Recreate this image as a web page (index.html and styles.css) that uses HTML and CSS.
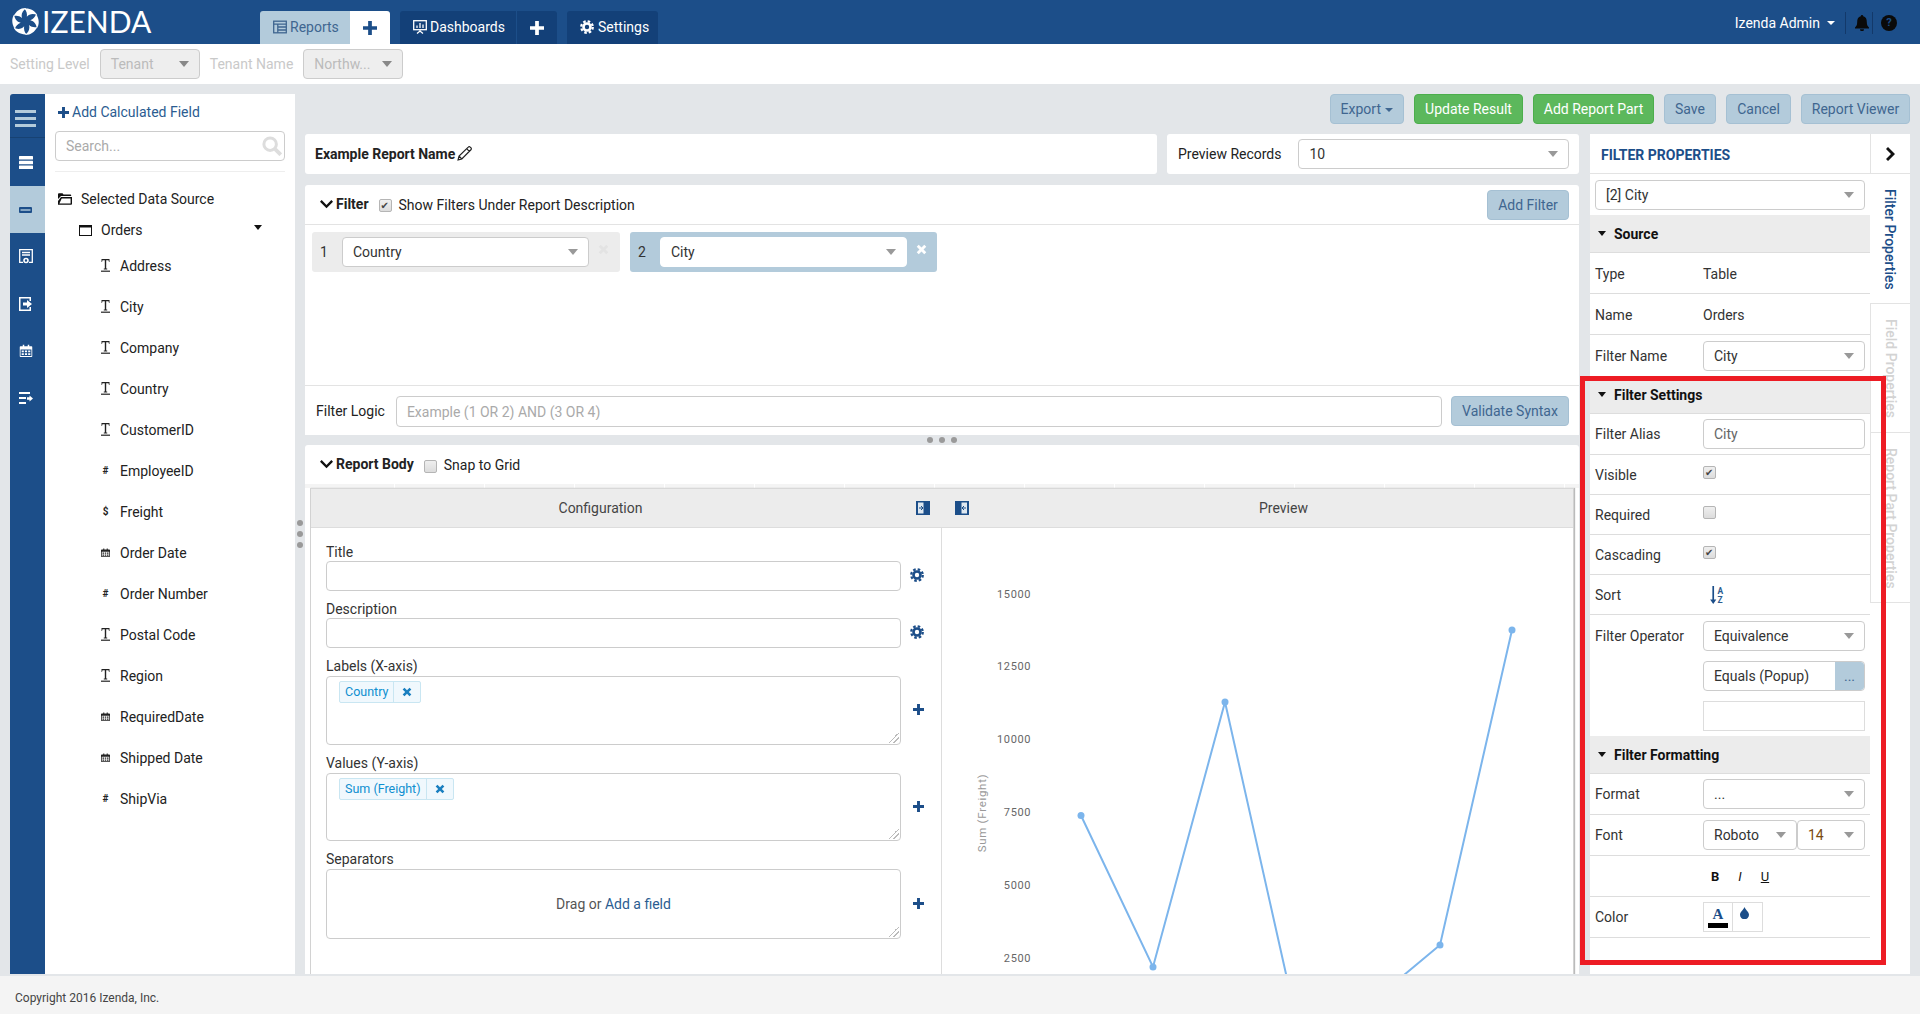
FILE: index.html
```html
<!DOCTYPE html>
<html lang="en">
<head>
<meta charset="utf-8">
<title>Izenda Report Designer</title>
<link rel="stylesheet" href="styles.css">
</head>
<body>
<svg class="sprite" width="0" height="0" aria-hidden="true">
  <defs>
    <symbol id="i-plus" viewBox="0 0 12 12"><path d="M4.400 0h3.200v4.400H12v3.200H7.600V12H4.400V7.600H0V4.400h4.400z"/></symbol>
    <symbol id="i-x" viewBox="0 0 12 12"><path d="M3 .8 6 3.800 9 .8 11.200 3 8.200 6l3 3L9 11.200l-3-3-3 3L.8 9l3-3-3-3z"/></symbol>
    <symbol id="i-gear" viewBox="0 0 16 16"><circle cx="8" cy="8" r="4" fill="none" stroke="currentColor" stroke-width="3"/><circle cx="8" cy="8" r="6.600" fill="none" stroke="currentColor" stroke-width="2.600" stroke-dasharray="2.900 2.280"/></symbol>
    <symbol id="i-chev" viewBox="0 0 14 10"><path d="M1.800.8 7 6 12.200.8 14 2.600 7 9.600 0 2.600z"/></symbol>
    <symbol id="i-t" viewBox="0 0 9 13"><path d="M.5 0h8v3H8L7.500 1.200H5.200V9.600h1V10.400H2.800V9.600h1V1.200H1.500L1 3H.5z"/><path d="M0 11.600h9v1.200H0z"/></symbol>
    <symbol id="i-cal" viewBox="0 0 12 12"><path d="M1 2h2V.6h1.400V2h3.200V.6H9V2h2a1 1 0 0 1 1 1v8a1 1 0 0 1-1 1H1a1 1 0 0 1-1-1V3a1 1 0 0 1 1-1zm0 3v6h10V5z"/><path d="M2 6h2v1.600H2zM5 6h2v1.600H5zM8 6h2v1.600H8zM2 8.600h2v1.600H2zM5 8.600h2v1.600H5zM8 8.600h2v1.600H8z"/></symbol>
    <symbol id="i-blade" viewBox="0 0 24 24"><path d="M11 .6C16 .1 20.500 2.400 22.600 6.600C19.500 4.800 15.500 5 13.200 7.800C13.600 5 13 2.500 11 .6Z"/></symbol>
  </defs>
</svg>

<header class="topbar">
  <div class="logo">
    <svg class="logo-mark" viewBox="0 0 24 24" fill="#fff">
      <use href="#i-blade"/>
      <use href="#i-blade" transform="rotate(60 12 12)"/>
      <use href="#i-blade" transform="rotate(120 12 12)"/>
      <use href="#i-blade" transform="rotate(180 12 12)"/>
      <use href="#i-blade" transform="rotate(240 12 12)"/>
      <use href="#i-blade" transform="rotate(300 12 12)"/>
    </svg>
    <span class="logo-text">IZENDA</span>
  </div>
  <nav class="tabs">
    <div class="tabgroup">
      <a class="tab tab-on">
        <svg class="tab-ico" viewBox="0 0 14 14" fill="none" stroke="currentColor" stroke-width="1.300"><rect x=".7" y="1.200" width="12.600" height="11.600"/><path d="M.7 4.200h12.600M4.800 4.200v8.600M4.800 7h8.500M4.800 10h8.500"/></svg>
        Reports</a>
      <a class="tab-plus tab-plus-on"><svg class="ico-13"><use href="#i-plus"/></svg></a>
    </div>
    <div class="tabgroup">
      <a class="tab">
        <svg class="tab-ico" viewBox="0 0 14 14" fill="none" stroke="currentColor" stroke-width="1.300"><rect x=".7" y=".7" width="12.600" height="9"/><path d="M4 8V5.500M7 8V3M10 8V4.500M7 10v1.500M4 13.500l3-2.500 3 2.500"/></svg>
        Dashboards</a>
      <a class="tab-plus"><svg class="ico-13"><use href="#i-plus"/></svg></a>
    </div>
    <div class="tabgroup">
      <a class="tab">
        <svg class="tab-ico gear-ico"><use href="#i-gear"/></svg>
        Settings</a>
    </div>
  </nav>
  <div class="user">
    <span>Izenda Admin</span><i class="caret-w"></i>
    <span class="sep"></span>
    <svg class="bell" viewBox="0 0 14 16" fill="#0a0a0a"><path d="M7 0a1.200 1.200 0 0 1 1.200 1.300C11 2 11.800 4.300 11.800 7c0 3 .9 4.300 2.200 5.600v.9H0v-.9C1.300 11.300 2.200 10 2.200 7c0-2.700.8-5 3.600-5.700A1.200 1.200 0 0 1 7 0zM5 14.300h4a2 2 0 0 1-4 0z"/></svg>
    <span class="sep sep2"></span>
    <span class="help">?</span>
  </div>
</header>

<div class="subbar">
  <span class="sub-label">Setting Level</span>
  <div class="sel sel-off sel-tenant"><span>Tenant</span></div>
  <span class="sub-label">Tenant Name</span>
  <div class="sel sel-off sel-tenant"><span>Northw...</span></div>
</div>

<main class="main">
  <nav class="rail">
    <div class="rail-item rail-head">
      <svg width="21" height="17" viewBox="0 0 21 17" fill="#b3cbdb"><rect width="21" height="3"/><rect y="7" width="21" height="3"/><rect y="14" width="21" height="3"/></svg>
    </div>
    <div class="rail-item rail-first">
      <svg width="14" height="13" viewBox="0 0 14 13" fill="#fff"><rect width="14" height="3.400" rx=".5"/><rect y="4.800" width="14" height="3.400" rx=".5"/><rect y="9.600" width="14" height="3.400" rx=".5"/></svg>
    </div>
    <div class="rail-item rail-on">
      <svg width="13" height="6" viewBox="0 0 13 6"><rect width="13" height="6" rx="1" fill="#1c4e89"/><rect x="1.500" y="2.300" width="10" height="1.400" fill="#b3cbdb"/></svg>
    </div>
    <div class="rail-item">
      <svg width="14" height="16" viewBox="0 0 14 16" fill="none" stroke="#fff" stroke-width="1.300"><path d="M4 13.300H.7V.7h12.600v12.600H10M3 3.500h8M3 6h8"/><circle cx="7" cy="11.500" r="2" stroke-width="1.600"/></svg>
    </div>
    <div class="rail-item">
      <svg width="14" height="14" viewBox="0 0 14 14" fill="#fff"><path d="M0 0h12v4h-1.500V1.500h-9v11h9V10H12v4H0z"/><path d="M4 5.500h4V3l5 4-5 4V8.500H4z"/></svg>
    </div>
    <div class="rail-item">
      <svg width="14" height="13" viewBox="0 0 12 12" fill="#fff"><use href="#i-cal"/></svg>
    </div>
    <div class="rail-item">
      <svg width="14" height="12" viewBox="0 0 14 12" fill="#fff"><path d="M0 0h11v2H0zM0 5h7v2H0zM0 10h7v2H0zM8 5.200h2.500V3.500L14 6.500l-3.500 3V7.800H8z"/></svg>
    </div>
  </nav>

  <aside class="fields">
    <a class="add-calc"><svg class="ico-11"><use href="#i-plus"/></svg>Add Calculated Field</a>
    <div class="search">
      <input class="search-input" type="text" placeholder="Search...">
      <svg class="search-ico" viewBox="0 0 16 16" fill="none" stroke="#ddd" stroke-width="2.400"><circle cx="6.500" cy="6.500" r="5"/><path d="m10.500 10.500 4.500 4.500" stroke-width="3"/></svg>
    </div>
    <div class="tree">
      <div class="tree-root">
        <svg width="14" height="12" viewBox="0 0 14 12" fill="#111"><path d="M0 1.500C0 .7.500.2 1.200.2h3.300l1 1.300h6.700c.6 0 1 .5 1 1V3H3L0 6zM0 11.800V8l3-4h11v6.800c0 .5-.4 1-1 1zM1.400 10.400h11.200V5.400H3.700z"/></svg>
        <span>Selected Data Source</span>
      </div>
      <div class="tree-table">
        <svg width="13" height="11" viewBox="0 0 13 11" fill="none" stroke="#111"><rect x=".5" y=".5" width="12" height="10"/><path d="M0 1.500h13" stroke-width="2"/></svg>
        <span>Orders</span>
        <i class="caret-d"></i>
      </div>
      <ul class="field-list">
        <li><svg class="fi"><use href="#i-t"/></svg>Address</li>
        <li><svg class="fi"><use href="#i-t"/></svg>City</li>
        <li><svg class="fi"><use href="#i-t"/></svg>Company</li>
        <li><svg class="fi"><use href="#i-t"/></svg>Country</li>
        <li><svg class="fi"><use href="#i-t"/></svg>CustomerID</li>
        <li><b class="fg">#</b>EmployeeID</li>
        <li><b class="fg">$</b>Freight</li>
        <li><svg class="fi fi-cal"><use href="#i-cal"/></svg>Order Date</li>
        <li><b class="fg">#</b>Order Number</li>
        <li><svg class="fi"><use href="#i-t"/></svg>Postal Code</li>
        <li><svg class="fi"><use href="#i-t"/></svg>Region</li>
        <li><svg class="fi fi-cal"><use href="#i-cal"/></svg>RequiredDate</li>
        <li><svg class="fi fi-cal"><use href="#i-cal"/></svg>Shipped Date</li>
        <li><b class="fg">#</b>ShipVia</li>
      </ul>
    </div>
  </aside>

  <div class="gutter"><i></i><i></i><i></i></div>

  <div class="workspace">
    <div class="toolbar">
      <button class="btn w-export">Export <i class="caret-b"></i></button>
      <button class="btn btn-green w-update">Update Result</button>
      <button class="btn btn-green w-addpart">Add Report Part</button>
      <button class="btn w-save">Save</button>
      <button class="btn w-cancel">Cancel</button>
      <button class="btn w-viewer">Report Viewer</button>
    </div>
    <div class="columns">
      <div class="center">
        <div class="titlerow">
          <div class="card name-card">
            <strong>Example Report Name</strong>
            <svg class="pencil" viewBox="0 0 14 14" fill="none" stroke="#222" stroke-width="1.100"><path d="M1 13l.9-3.500L10.500 1a1.300 1.300 0 0 1 1.900 0l.6.600a1.300 1.300 0 0 1 0 1.900L4.500 12.100zM9 2.500l2.500 2.500M2 9.500l2.500 2.500"/></svg>
          </div>
          <div class="card preview-card">
            <span>Preview Records</span>
            <div class="sel sel-records"><span>10</span></div>
          </div>
        </div>

        <section class="card filter-card">
          <div class="filter-head">
            <svg class="chev"><use href="#i-chev"/></svg>
            <strong class="sect">Filter</strong>
            <span class="check on"></span>
            <span>Show Filters Under Report Description</span>
            <button class="btn btn-right w-addfilter">Add Filter</button>
          </div>
          <div class="filter-items">
            <div class="fitem">
              <span class="fnum">1</span>
              <div class="sel sel-filter"><span>Country</span></div>
              <svg class="fx"><use href="#i-x"/></svg>
            </div>
            <div class="fitem fitem-on">
              <span class="fnum">2</span>
              <div class="sel sel-filter"><span>City</span></div>
              <svg class="fx"><use href="#i-x"/></svg>
            </div>
          </div>
          <div class="filter-logic">
            <span>Filter Logic</span>
            <input class="inp logic-input" type="text" placeholder="Example (1 OR 2) AND (3 OR 4)">
            <button class="btn w-validate">Validate Syntax</button>
          </div>
        </section>

        <div class="splitter"><i></i><i></i><i></i></div>

        <section class="card body-card">
          <div class="body-head">
            <svg class="chev"><use href="#i-chev"/></svg>
            <strong class="sect">Report Body</strong>
            <span class="check"></span>
            <span>Snap to Grid</span>
          </div>
          <div class="ruler"></div>
          <div class="designer">
            <div class="config">
              <div class="pane-head pane-head-l">
                <span class="pane-title">Configuration</span>
                <svg class="dock dock-l" viewBox="0 0 14 14"><path fill="#1c4e89" d="M0 0h14v14H0z"/><path fill="#dfe8f0" d="M2 1.500h5.500v11H2z"/><path fill="none" stroke="#1c4e89" d="M3 7h3.500M5 5l2 2-2 2"/></svg>
                <svg class="dock dock-r" viewBox="0 0 14 14"><path fill="#1c4e89" d="M0 0h14v14H0z"/><path fill="#dfe8f0" d="M6.500 1.500H12v11H6.500z"/><path fill="none" stroke="#1c4e89" d="M11 7H7.500M9 5 7 7l2 2"/></svg>
              </div>
              <div class="form">
                <div class="ff">
                  <label class="ff-label">Title</label>
                  <div class="ff-row"><input class="inp ff-input" type="text"><svg class="ff-gear"><use href="#i-gear"/></svg></div>
                </div>
                <div class="ff">
                  <label class="ff-label">Description</label>
                  <div class="ff-row"><input class="inp ff-input" type="text"><svg class="ff-gear"><use href="#i-gear"/></svg></div>
                </div>
                <div class="ff">
                  <label class="ff-label ff-label-tall">Labels (X-axis)</label>
                  <div class="ff-row">
                    <div class="drop"><span class="chip"><span>Country</span><svg class="chip-x"><use href="#i-x"/></svg></span></div>
                    <svg class="ff-plus"><use href="#i-plus"/></svg>
                  </div>
                </div>
                <div class="ff">
                  <label class="ff-label ff-label-tall">Values (Y-axis)</label>
                  <div class="ff-row">
                    <div class="drop"><span class="chip"><span>Sum (Freight)</span><svg class="chip-x"><use href="#i-x"/></svg></span></div>
                    <svg class="ff-plus"><use href="#i-plus"/></svg>
                  </div>
                </div>
                <div class="ff">
                  <label class="ff-label ff-label-tall">Separators</label>
                  <div class="ff-row">
                    <div class="drop drop-empty">Drag or&nbsp;<a class="lnk">Add a field</a></div>
                    <svg class="ff-plus"><use href="#i-plus"/></svg>
                  </div>
                </div>
              </div>
            </div>
            <div class="preview">
              <div class="pane-head pane-head-r"><span class="pane-title">Preview</span></div>
              <svg class="chart" width="632" height="446" viewBox="0 0 632 446">
                <g class="ytick">
                  <text x="89" y="70">15000</text>
                  <text x="89" y="142">12500</text>
                  <text x="89" y="215">10000</text>
                  <text x="89" y="288">7500</text>
                  <text x="89" y="361">5000</text>
                  <text x="89" y="434">2500</text>
                </g>
                <text class="ytitle" transform="translate(44 285) rotate(-90)">Sum (Freight)</text>
                <polyline class="line" points="139,287.500 211,439 283,174 355,495 426,477 498,417 570,102"/>
                <g class="dot">
                  <circle cx="139" cy="287.500" r="3.500"/>
                  <circle cx="211" cy="439" r="3.500"/>
                  <circle cx="283" cy="174" r="3.500"/>
                  <circle cx="498" cy="417" r="3.500"/>
                  <circle cx="570" cy="102" r="3.500"/>
                </g>
              </svg>
            </div>
          </div>
        </section>
      </div>

      <aside class="props">
        <div class="props-main">
          <div class="props-title">FILTER PROPERTIES</div>
          <div class="props-picker"><div class="sel"><span>[2] City</span></div></div>
          <div class="ph"><i class="caret-d"></i>Source</div>
          <div class="pr pr-text"><span class="pl">Type</span><span class="pv">Table</span></div>
          <div class="pr pr-text"><span class="pl">Name</span><span class="pv">Orders</span></div>
          <div class="pr pr-last"><span class="pl">Filter Name</span><div class="sel pc"><span>City</span></div></div>
          <div class="ph"><i class="caret-d"></i>Filter Settings</div>
          <div class="pr"><span class="pl">Filter Alias</span><input class="inp pc pc-input" type="text" value="City"></div>
          <div class="pr pr-40"><span class="pl">Visible</span><span class="check on"></span></div>
          <div class="pr pr-40"><span class="pl">Required</span><span class="check"></span></div>
          <div class="pr pr-40"><span class="pl">Cascading</span><span class="check on"></span></div>
          <div class="pr pr-40"><span class="pl">Sort</span>
            <svg class="sort" width="18" height="18" viewBox="0 0 16 16"><path d="M3 0h1.500v12H6.500L3.750 16 1 12h2z" fill="#1c4e89"/><text x="7.500" y="7" class="sort-t">A</text><text x="7.500" y="15" class="sort-t">Z</text></svg>
          </div>
          <div class="op">
            <div class="op-row"><span class="pl">Filter Operator</span><div class="sel pc"><span>Equivalence</span></div></div>
            <div class="op-row"><span class="pl"></span><div class="pop pc"><span>Equals (Popup)</span><b>...</b></div></div>
            <div class="op-row"><span class="pl"></span><input class="inp pc sq" type="text"></div>
          </div>
          <div class="ph ph-2"><i class="caret-d"></i>Filter Formatting</div>
          <div class="pr"><span class="pl">Format</span><div class="sel pc"><span>...</span></div></div>
          <div class="pr"><span class="pl">Font</span><div class="font-pair"><div class="sel sel-font"><span>Roboto</span></div><div class="sel sel-size"><span>14</span></div></div></div>
          <div class="pr"><span class="pl"></span><div class="biu"><b>B</b><i>I</i><u>U</u></div></div>
          <div class="pr"><span class="pl">Color</span>
            <div class="swatches">
              <div class="sw"><span class="sw-a">A</span><span class="sw-bar"></span></div>
              <div class="sw sw-drop"><svg width="9" height="12" viewBox="0 0 9 12" fill="#1c4e89"><path d="M4.500 0C5.500 3 9 5 9 7.700A4.400 4.400 0 0 1 0 7.700C0 5 3.500 3 4.500 0z"/></svg></div>
            </div>
          </div>
        </div>
        <div class="props-tabs">
          <div class="pt-head"><svg width="9" height="14" viewBox="0 0 9 14" fill="#111"><path d="M2 0 9 7l-7 7-2-2 5-5-5-5z"/></svg></div>
          <div class="pt pt-on"><span>Filter Properties</span></div>
          <div class="pt pt-2"><span>Field Properties</span></div>
          <div class="pt pt-3"><span>Report Part Properties</span></div>
        </div>
      </aside>
    </div>
  </div>
</main>

<footer class="footer">Copyright 2016 Izenda, Inc.</footer>
<div class="callout"></div>
</body>
</html>
```
FILE: styles.css
```css
* { box-sizing: border-box; }
html, body { margin: 0; height: 100%; }
body {
  position: relative;
  width: 1920px;
  height: 1014px;
  overflow: hidden;
  display: flex;
  flex-direction: column;
  font: 14px/20px Roboto, "Liberation Sans", sans-serif;
  color: #222;
  background: #f4f4f4;
}
.sprite { position: absolute; }
svg { display: block; flex: none; }
svg:not([fill]) { fill: currentColor; }
a { color: inherit; text-decoration: none; }
ul { list-style: none; margin: 0; padding: 0; }
button { font: inherit; }
input { font: inherit; outline: none; }

/* top bar */
.topbar {
  height: 44px;
  flex: none;
  background: #1c4e89;
  display: flex;
  color: #fff;
}
.logo { width: 260px; display: flex; align-items: center; padding: 0 0 2px 12px; }
.logo-mark { width: 27px; height: 27px; }
.logo-text {
  font: 400 30px/1 Lato, Roboto, sans-serif;
  margin-left: 3px;
  letter-spacing: 0;
}
.tabs { display: flex; gap: 10px; align-items: flex-end; }
.tabgroup { display: flex; height: 33px; border-radius: 3px 3px 0 0; overflow: hidden; background: #134078; }
.tab { display: flex; align-items: center; gap: 3px; padding: 0 0 2px 13px; font-size: 14px; }
.tabgroup:nth-child(1) .tab { width: 90px; padding-left: 13px; }
.tabgroup:nth-child(2) .tab { width: 116px; }
.tabgroup:nth-child(3) .tab { width: 91px; padding-left: 13px; gap: 4px; }
.tab-on { background: #b3cbdb; color: #3f6690; }
.tab-ico { width: 14px; height: 14px; }
.tab-plus { width: 41px; display: flex; align-items: center; justify-content: center; border-left: 1px solid #1c4e89; color: #fff; }
.tab-plus-on { width: 40px; background: #fff; color: #1c4e89; border-left: 0; }
.ico-13 { width: 14px; height: 14px; }
.user { margin-left: auto; display: flex; align-items: center; padding: 1px 23px 0 0; }
.caret-w { margin-left: 7px; border: 4px solid transparent; border-top: 4px solid #fff; border-bottom: 0; width: 0; }
.sep { width: 1px; height: 22px; background: #13396a; margin: 0 9px 0 10px; }
.sep2 { margin: 0 8px 0 3px; }
.bell { width: 14px; height: 16px; }
.help { width: 16px; height: 16px; border-radius: 50%; background: #0a0a0a; color: #1c4e89; font: 700 11px/16px Roboto, sans-serif; text-align: center; }

/* sub bar */
.subbar {
  height: 40px;
  flex: none;
  background: #fff;
  display: flex;
  align-items: center;
  padding-left: 10px;
  gap: 10px;
}
.sub-label { color: #c9c9c9; }
.sel {
  height: 30px;
  border: 1px solid #ccc;
  border-radius: 4px;
  background: #fff;
  display: flex;
  align-items: center;
  justify-content: space-between;
  padding: 0 10px;
  color: #333;
}
.sel::after {
  content: "";
  border: 5px solid transparent;
  border-top: 6px solid #999;
  border-bottom: 0;
}
.sel-off { background: #eee; color: #bbb; }
.sel-off::after { border-top-color: #888; }
.sel-tenant { width: 100px; }

/* main */
.main {
  flex: 1;
  min-height: 0;
  display: flex;
  background: #e3e6e9;
  padding: 10px 10px 2px;
}
.rail { width: 35px; flex: none; background: #1c4e89; border-radius: 3px 0 0 0; color: #fff; }
.rail-item { height: 47px; display: flex; align-items: center; justify-content: center; padding-right: 4px; }
.rail-head { height: 44px; border-bottom: 1px solid #174273; padding-top: 5px; }
.rail-first { height: 48px; }
.rail-on { background: #b3cbdb; }

.fields { width: 250px; flex: none; background: #fff; padding: 8px 10px 0; }
.add-calc { display: flex; align-items: center; height: 20px; color: #2b5c91; padding-left: 3px; gap: 3px; }
.ico-11 { width: 11px; height: 11px; color: #1c4e89; }
.search { position: relative; margin-top: 9px; padding-bottom: 10px; border-bottom: 1px solid #eee; }
.search-input { width: 100%; height: 30px; border: 1px solid #ccc; border-radius: 4px; padding: 0 10px; }
.search-input::placeholder { color: #aaa; }
.search-ico { position: absolute; right: 3px; top: 5px; width: 20px; height: 20px; }
.tree-root { display: flex; align-items: center; gap: 9px; margin-top: 17px; padding-left: 3px; height: 20px; }
.tree-table { display: flex; align-items: center; gap: 9px; margin-top: 11px; padding-left: 24px; height: 20px; position: relative; }
.caret-d { display: block; border: 4px solid transparent; border-top: 5px solid #111; border-bottom: 0; width: 0; }
.tree-table .caret-d { position: absolute; left: 199px; top: 5px; }
.field-list { margin-top: 5px; }
.field-list li { height: 41px; display: flex; align-items: center; padding-left: 46px; }
.fi { width: 9px; height: 13px; margin-right: 10px; }
.fi-cal { height: 9px; }
.fg { width: 9px; margin-right: 10px; font-size: 10px; font-weight: 700; text-align: center; }

.gutter { width: 10px; flex: none; display: flex; flex-direction: column; align-items: center; justify-content: center; gap: 5px; }
.gutter i, .splitter i { display: block; width: 6px; height: 6px; border-radius: 50%; background: #9a9a9a; }

.workspace { flex: 1; min-width: 0; display: flex; flex-direction: column; }
.toolbar { height: 30px; display: flex; justify-content: flex-end; gap: 10px; margin-bottom: 10px; }
.btn {
  height: 30px;
  padding: 0;
  border: 1px solid #a5c0d3;
  border-radius: 4px;
  background: #b3cbdb;
  color: #3f6690;
  white-space: nowrap;
  flex: none;
}
.w-export { width: 74px; }
.w-update { width: 109px; }
.w-addpart { width: 121px; }
.w-save { width: 52px; }
.w-cancel { width: 65px; }
.w-viewer { width: 109px; }
.w-addfilter { width: 82px; }
.w-validate { width: 118px; }
.btn-green { background: #5cb85c; border-color: #4cae4c; color: #fff; }
.caret-b { display: inline-block; vertical-align: middle; margin-left: 1px; border: 4px solid transparent; border-top: 4px solid #3f6690; border-bottom: 0; }
.btn-right { margin-left: auto; }

.columns { flex: 1; min-height: 0; display: flex; gap: 11px; }
.center { width: 1274px; flex: none; display: flex; flex-direction: column; }
.card { background: #fff; border-radius: 3px; }
.titlerow { height: 40px; flex: none; display: flex; gap: 10px; margin-bottom: 11px; }
.name-card { width: 852px; display: flex; align-items: center; gap: 2px; padding: 0 0 1px 10px; }
.pencil { width: 15px; height: 15px; }
.preview-card { flex: 1; display: flex; align-items: center; padding: 0 10px 0 11px; gap: 17px; }
.sel-records { flex: 1; height: 30px; }

.filter-card { height: 250px; flex: none; display: flex; flex-direction: column; border-radius: 3px 3px 0 0; }
.filter-head { height: 40px; flex: none; display: flex; align-items: center; padding: 0 10px 0 15px; border-bottom: 1px solid #e3e3e3; }
.chev { width: 13px; height: 10px; margin: 0 3px 2px 0; color: #111; }
.sect { margin-right: 10px; position: relative; top: -1px; }
.check {
  width: 13px;
  height: 13px;
  flex: none;
  border: 1px solid #b5b5b5;
  border-radius: 2px;
  background: linear-gradient(#efefef, #dcdcdc);
  position: relative;
  margin-right: 7px;
  top: 1px;
}
.check.on::after {
  content: "✔";
  position: absolute;
  left: 1px;
  top: -4px;
  font: 10px/20px "DejaVu Sans", sans-serif;
  color: #444;
}
.filter-items { flex: 1; display: flex; gap: 10px; align-items: flex-start; padding: 7px; }
.fitem { width: 308px; height: 40px; background: #ececec; border-radius: 3px; display: flex; align-items: center; padding-left: 8px; color: #333; }
.fitem-on { width: 307px; background: #b3cbdb; }
.fnum { width: 22px; flex: none; }
.sel-filter { width: 247px; flex: none; }
.fitem-on .sel-filter { border-color: #fff; }
.fx { width: 11px; height: 11px; margin: -6px 0 0 9px; color: #e3e3e3; flex: none; }
.fitem-on .fx { color: #fff; }
.filter-logic { height: 50px; flex: none; border-top: 1px solid #e3e3e3; display: flex; align-items: flex-start; padding: 10px 10px 0 11px; gap: 9px; }
.filter-logic > span { line-height: 30px; margin-right: 2px; }
.inp { height: 30px; border: 1px solid #ccc; border-radius: 4px; padding: 0 10px; background: #fff; color: #555; }
.inp::placeholder { color: #aaa; }
.logic-input { flex: 1; height: 31px; }

.splitter { height: 10px; flex: none; display: flex; justify-content: center; align-items: center; gap: 6px; }

.body-card { flex: 1; min-height: 0; display: flex; flex-direction: column; overflow: hidden; border-radius: 3px 3px 0 0; }
.body-head { height: 39px; flex: none; display: flex; align-items: center; padding-left: 15px; padding-top: 1px; }
.ruler { height: 4px; flex: none; background: repeating-linear-gradient(90deg, #f4f4f4 0 89px, #fff 89px 90px); }
.designer { flex: 1; min-height: 0; margin-left: 5px; width: 1264px; display: flex; border: 1px solid #d2d2d2; border-bottom: 0; border-top-color: #d8d8d8; box-shadow: 1px 0 1px #bbb; }
.config { width: 631px; flex: none; border-right: 1px solid #ddd; }
.preview { flex: 1; min-width: 0; }
.pane-head { height: 39px; background: #ececec; border-bottom: 1px solid #ddd; display: flex; align-items: center; justify-content: center; position: relative; color: #444; }
.pane-head-l { margin-right: -1px; padding: 0 52px 1px 0; }
.pane-head-r { padding: 0 0 1px 52px; }
.dock { position: absolute; top: 12px; width: 14px; height: 14px; }
.dock-l { left: 605px; }
.dock-r { left: 644px; z-index: 1; }
.form { padding: 15px 0 0 15px; display: flex; flex-direction: column; gap: 9px; }
.ff-label { display: block; height: 18px; line-height: 19px; color: #333; }
.ff-label-tall { height: 19px; }
.ff-row { display: flex; align-items: center; }
.ff-input { width: 575px; flex: none; }
.ff-gear { width: 14px; height: 14px; margin: -2px 0 0 9px; color: #1c4e89; }
.ff-plus { width: 11px; height: 11px; margin: -1px 0 0 12px; color: #1c4e89; }
.drop {
  width: 575px;
  height: 68.600px;
  flex: none;
  border: 1px solid #ccc;
  border-radius: 4px;
  padding: 4px 12px;
  position: relative;
}
.drop::after {
  content: "";
  position: absolute;
  right: 1px;
  bottom: 1px;
  width: 11px;
  height: 11px;
  background: linear-gradient(135deg, transparent 50%, #bbb 50%, #bbb 58%, transparent 58%, transparent 72%, #bbb 72%, #bbb 80%, transparent 80%);
}
.chip { display: inline-flex; align-items: center; height: 22px; border: 1px solid #c9e6f2; border-radius: 2px; background: #f0f8fd; color: #0e8fd0; font-size: 12.500px; }
.chip > span { padding: 0 5px 0 5px; border-right: 1px solid #c9e6f2; line-height: 20px; }
.chip-x { width: 10px; height: 10px; margin: 0 8px 0 8px; color: #1a7fc0; }
.drop-empty { display: flex; align-items: center; justify-content: center; color: #555; height: 70px; }
.lnk { color: #2b5c91; }

.chart { overflow: hidden; }
.ytick text { font: 11px Roboto, sans-serif; letter-spacing: .6px; text-anchor: end; fill: #666; }
.ytitle { font: 11.500px Roboto, sans-serif; letter-spacing: .7px; text-anchor: middle; fill: #999; }
.line { fill: none; stroke: #7cb5ec; stroke-width: 2; }
.dot { fill: #7cb5ec; }

/* properties */
.props { flex: 1; display: flex; background: #fff; min-width: 0; }
.props-main { width: 280px; flex: none; }
.props-title { height: 40px; line-height: 42px; padding-left: 11px; font-weight: 700; color: #1c4e89; border-bottom: 1px solid #e3e3e3; }
.props-picker { height: 41px; padding: 6px 5px 0; }
.ph { height: 38px; background: #ececec; display: flex; align-items: center; gap: 8px; padding-left: 8px; font-weight: 700; color: #111; border-bottom: 1px solid #ddd; }
.ph .caret-d { border-width: 4px; border-top-width: 5px; }
.pr { height: 41px; display: flex; align-items: center; padding: 0 5px; border-bottom: 1px solid #ddd; color: #333; }
.pr-text { padding-top: 1px; }
.pr-last { border-bottom: 0; }
.pr-40 { height: 40px; }
.pl { width: 108px; flex: none; }
.pv { color: #333; }
.pc { width: 162px; flex: none; }
.pc-input { color: #666; }
.pr .check { top: -2px; }
.sort { margin-left: 6px; }
.sort-t { font: 700 7.500px Roboto, sans-serif; fill: #2b5c91; }
.op { height: 121px; padding: 6px 5px 0; display: flex; flex-direction: column; gap: 10px; color: #333; }
.op-row { display: flex; align-items: center; height: 30px; }
.pop { height: 30px; border: 1px solid #ccc; border-radius: 4px; display: flex; align-items: center; justify-content: space-between; padding-left: 10px; overflow: hidden; }
.pop b { width: 29px; height: 28px; background: #b3cbdb; color: #3f6690; font-weight: 400; text-align: center; line-height: 28px; border-radius: 0 3px 3px 0; }
.sq { border-radius: 0; border-color: #ddd; }
.font-pair { display: flex; }
.sel-font { width: 94px; }
.sel-size { width: 68px; color: #7a4b10; }
.biu { display: flex; gap: 19px; padding: 2px 0 0 8px; font-size: 13px; color: #111; }
.biu i { font-style: italic; }
.swatches { display: flex; }
.sw { width: 30px; height: 30px; border: 1px solid #ddd; display: flex; flex-direction: column; align-items: center; }
.sw + .sw { border-left: 0; }
.sw-a { font: 700 15px/16px "Liberation Serif", serif; color: #1c4e89; margin-top: 3px; }
.sw-bar { width: 20px; height: 5px; background: #000; margin-top: 1px; }
.sw-drop { padding: 4px 0 0 7px; align-items: flex-start; }
.props-tabs { flex: 1; min-width: 0; }
.pt-head { height: 40px; display: flex; align-items: center; justify-content: center; border: 1px solid #e3e3e3; border-width: 0 0 1px 1px; }
.pt { writing-mode: vertical-rl; width: 100%; font-weight: 500; display: flex; justify-content: flex-start; align-items: center; padding-top: 15px; border-bottom: 1px solid #e3e3e3; color: #d3d3d3; border-left: 1px solid #e3e3e3; }
.pt-on { height: 130px; color: #1c4e89; border-left: 0; }
.pt-2 { height: 129px; }
.pt-3 { height: 170px; }

.footer { height: 38px; flex: none; background: #f4f4f4; font-size: 12px; line-height: 45px; padding-left: 15px; color: #444; }

/* red annotation frame laid over the screenshot */
.callout {
  position: absolute;
  left: 1580px;
  top: 376px;
  width: 306px;
  height: 589px;
  border: 5px solid #ed1c24;
  pointer-events: none;
}
```
